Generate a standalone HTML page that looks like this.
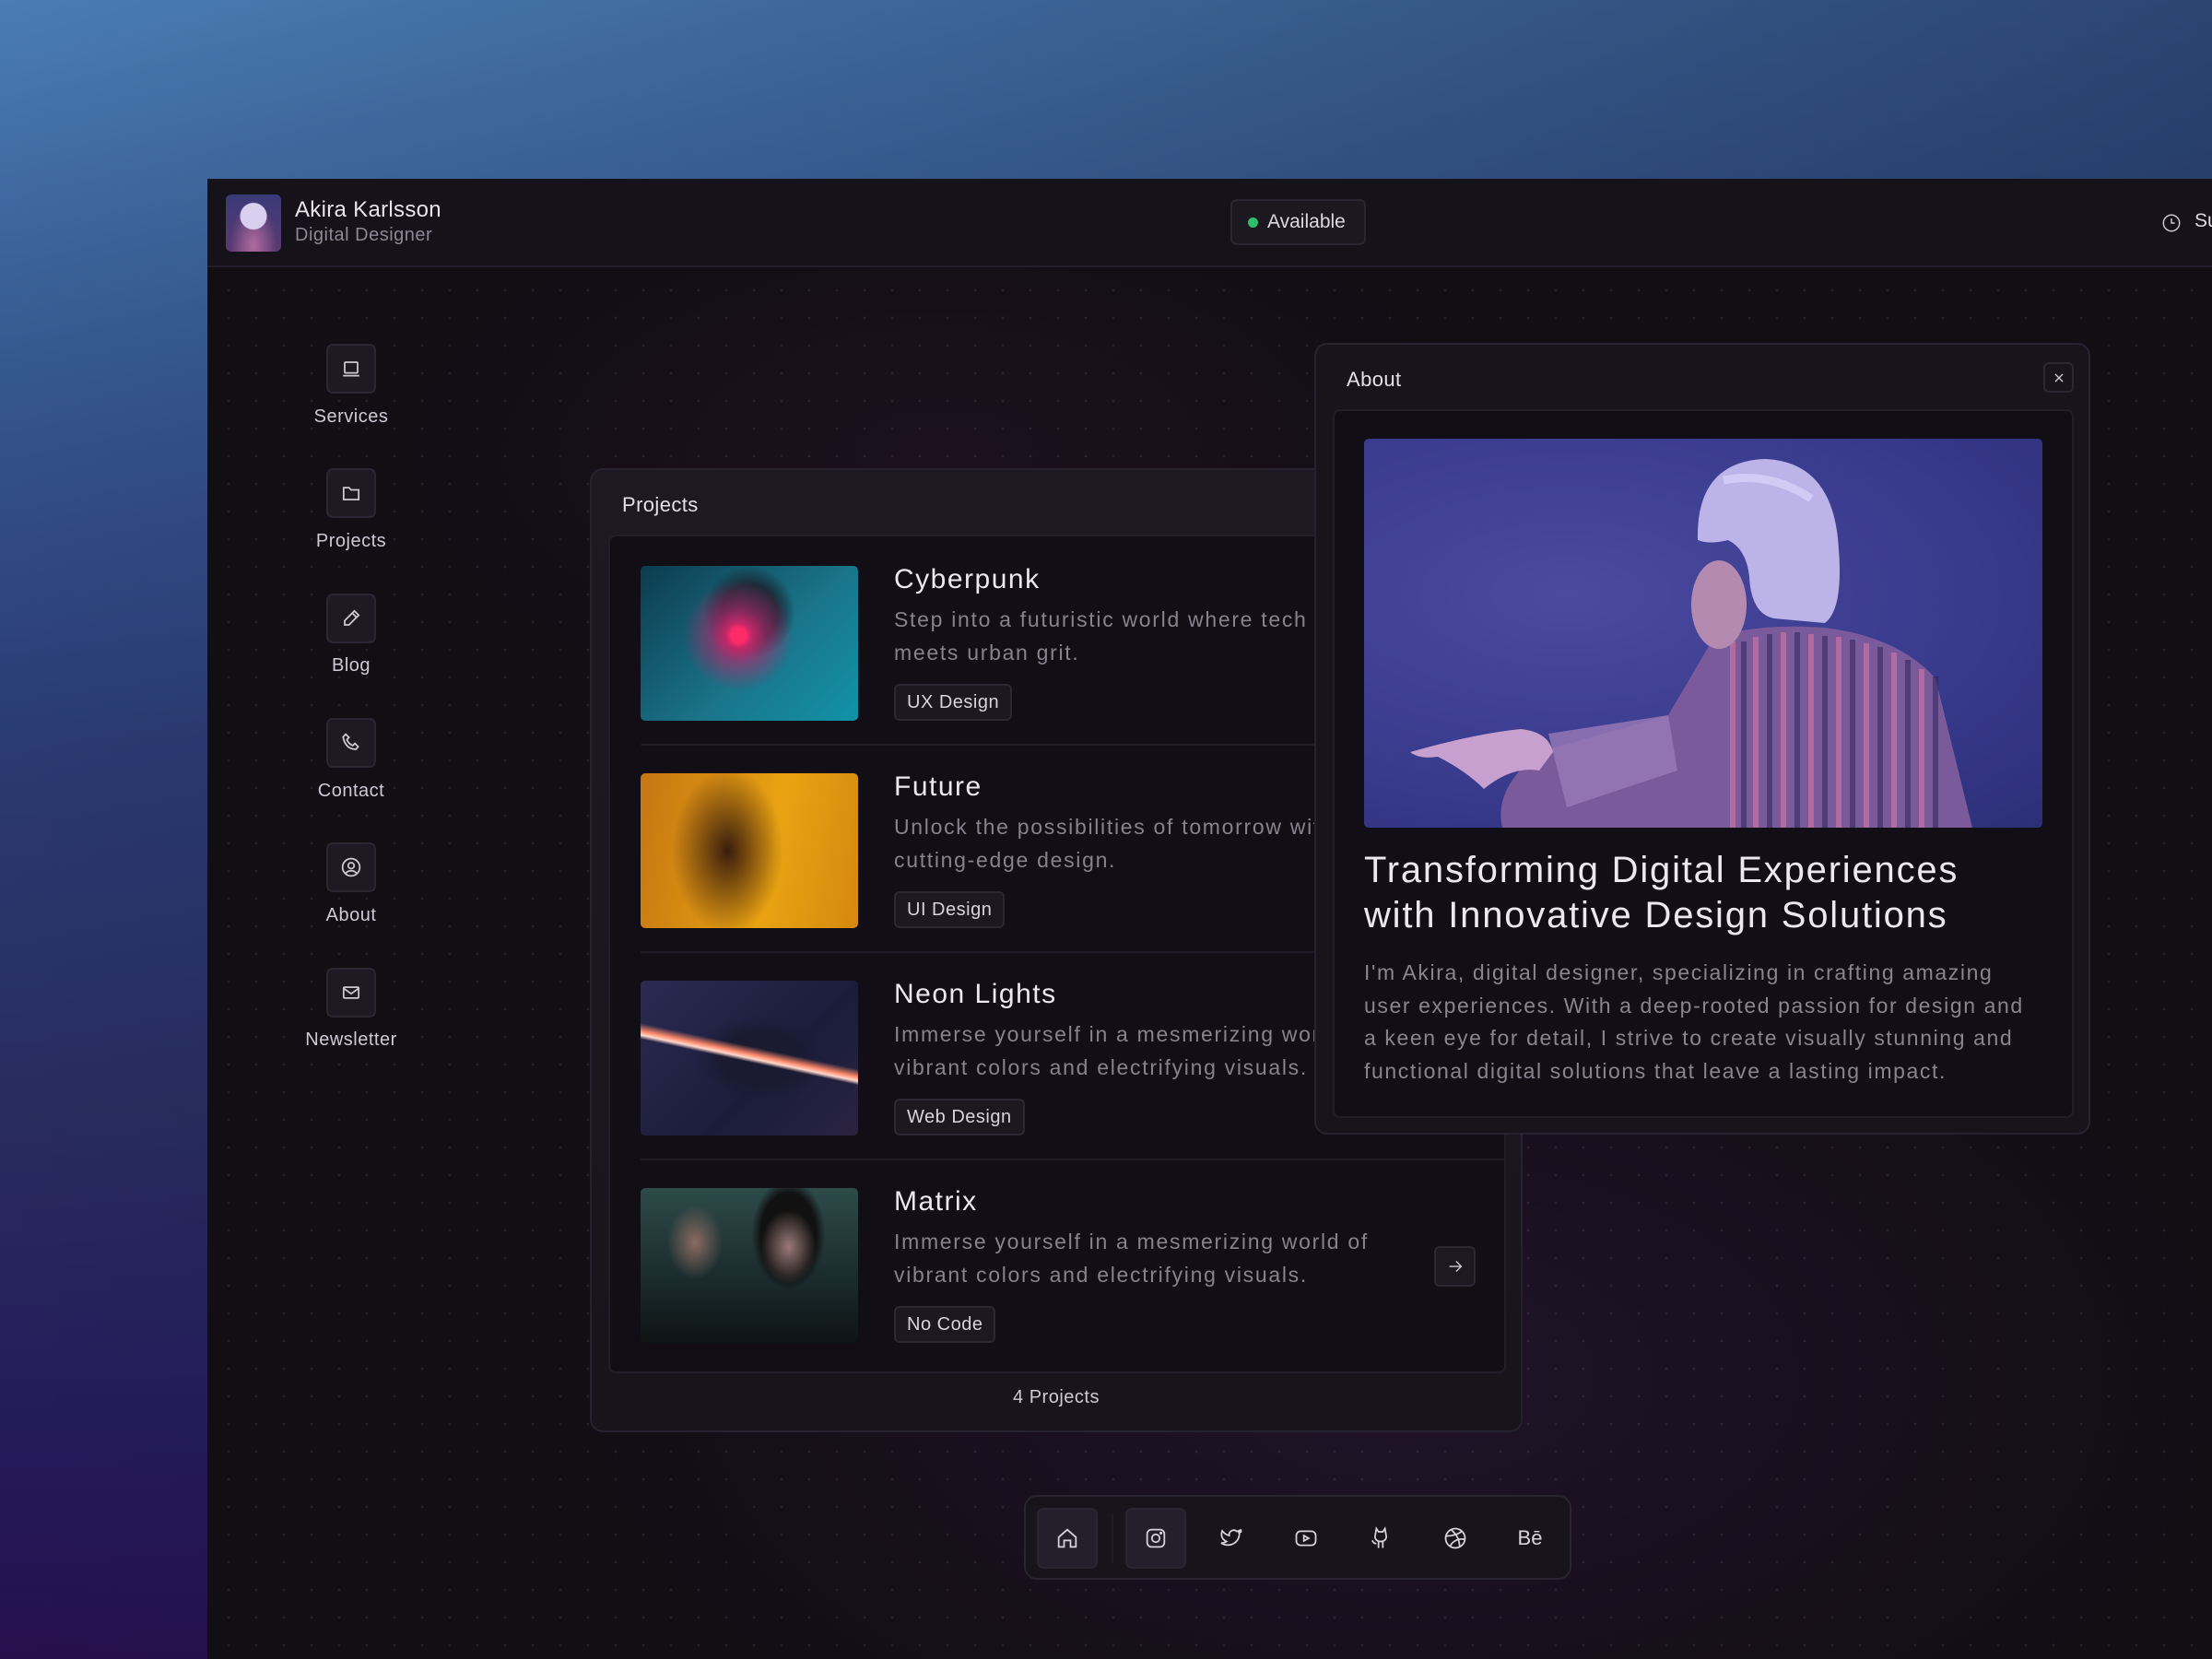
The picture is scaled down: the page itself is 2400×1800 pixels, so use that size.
<!DOCTYPE html>
<html><head><meta charset="utf-8"><style>
*{box-sizing:border-box;margin:0;padding:0}
body{width:2400px;height:1800px;overflow:hidden;font-family:"Liberation Sans",sans-serif;background:linear-gradient(90deg,rgba(0,0,0,0) 0%,rgba(18,24,60,.55) 100%),linear-gradient(180deg,#4a7db3 0,#35588f 22%,#2a3a72 45%,#282c5e 67%,#24195a 88%,#26104c 100%);position:relative}
.win{position:absolute;left:225px;top:194px;width:2175px;height:1606px;background:radial-gradient(ellipse 900px 500px at 1300px 1300px,rgba(70,30,90,.3),transparent),radial-gradient(ellipse 600px 300px at 800px 300px,rgba(70,25,70,.22),transparent),#110e14;overflow:hidden}
.dots{position:absolute;left:0;top:96px;right:0;bottom:0;background-image:radial-gradient(circle,rgba(255,255,255,.08) 1.2px,transparent 1.6px);background-size:30px 30px;background-position:8px 10px}
.hdr{position:absolute;left:0;top:0;right:0;height:96px;border-bottom:2px solid #221d28;background:#15121a}
.av{position:absolute;left:20px;top:17px;width:60px;height:62px;border-radius:6px;background:radial-gradient(circle at 50% 38%,#d8d0ee 0 14px,transparent 15px),radial-gradient(ellipse at 50% 90%,#b06aa0,transparent 60%),linear-gradient(#3a3a78,#5a3a70)}
.name{position:absolute;left:95px;top:20px;color:#e8e4ee;font-size:24px;letter-spacing:.3px}
.role{position:absolute;left:95px;top:50px;color:#8d8796;font-size:20px;letter-spacing:.5px}
.pill{position:absolute;left:1110px;top:22px;width:147px;height:50px;border:2px solid #2a2530;border-radius:7px;background:#1c1820;color:#ddd8e4;font-size:21px;line-height:46px;padding-left:38px}
.pill:before{content:"";position:absolute;left:17px;top:18px;width:11px;height:11px;border-radius:50%;background:#2fbf6c}
.clock{position:absolute;left:2120px;top:37px}
.su{position:absolute;left:2156px;top:34px;color:#ddd8e4;font-size:21px}
.side{position:absolute;left:129px;width:54px;height:54px;border:2px solid #2b2631;border-radius:7px;background:#1e1a24;display:flex;align-items:center;justify-content:center}
.slab{position:absolute;width:200px;left:56px;text-align:center;color:#cfc9d6;font-size:20px;letter-spacing:.5px}
.panel{position:absolute;border:2px solid #272230;border-radius:14px;background:linear-gradient(180deg,#1d1822,#18141c)}
.inner{position:absolute;border:2px solid #221d28;border-radius:8px;background:#110e15}
.ptitle{color:#e4e0ea;font-size:22px;position:absolute;letter-spacing:.4px}
.row{position:absolute;left:0;width:100%;height:225px}
.img{position:absolute;left:33px;top:32px;width:236px;height:168px;border-radius:5px;overflow:hidden}
.rt{position:absolute;left:308px;top:30px;color:#ece8f2;font-size:30px;white-space:nowrap;letter-spacing:1.5px}
.rd{position:absolute;left:308px;top:72px;color:#88828f;font-size:23px;line-height:36px;white-space:nowrap;letter-spacing:1.7px}
.tag{position:absolute;left:308px;top:160px;height:40px;border:2px solid #2c2732;border-radius:6px;background:#1c1820;color:#d8d3de;font-size:20px;line-height:36px;padding:0 12px;letter-spacing:.5px}
.sep{position:absolute;left:33px;right:0;top:0;height:2px;background:#1f1a25}
.dock{position:absolute;left:886px;top:1428px;width:594px;height:92px;border:2px solid #29242f;border-radius:14px;background:#18141c}
.db{position:absolute;top:12px;width:66px;height:66px;border-radius:7px;display:flex;align-items:center;justify-content:center}
.db.on{background:#241f2b;border:2px solid #2a2531}
svg{display:block}
</style></head><body>
<div class="win">
<div class="dots"></div>
<div class="hdr">
<div class="av"></div>
<div class="name">Akira Karlsson</div>
<div class="role">Digital Designer</div>
<div class="pill">Available</div>
<svg class="clock" width="22" height="22" viewBox="0 0 24 24" fill="none" stroke="#cfc9d6" stroke-width="1.6"><circle cx="12" cy="12" r="9.5"/><path d="M12 6.5V12h4"/></svg>
<div class="su">Su</div>
</div>

<div class="side" style="top:179px"><svg width="28" height="28" viewBox="0 0 24 24" fill="none" stroke="#cfc9d6" stroke-width="1.5"><rect x="6" y="6" width="12" height="10" rx="1"/><path d="M4.5 18.5h15"/></svg></div>
<div class="slab" style="top:247px">Services</div>
<div class="side" style="top:314px"><svg width="28" height="28" viewBox="0 0 24 24" fill="none" stroke="#cfc9d6" stroke-width="1.5"><path d="M5 7h5l2 2h7v9H5z"/></svg></div>
<div class="slab" style="top:382px">Projects</div>
<div class="side" style="top:450px"><svg width="28" height="28" viewBox="0 0 24 24" fill="none" stroke="#cfc9d6" stroke-width="1.5"><path d="M15 5l4 4-9 9H6v-4z M13 7l4 4"/></svg></div>
<div class="slab" style="top:517px">Blog</div>
<div class="side" style="top:585px"><svg width="28" height="28" viewBox="0 0 24 24" fill="none" stroke="#cfc9d6" stroke-width="1.5"><path d="M7 4l3 3-2 2c1 2.5 3 4.5 5.5 5.5l2-2 3 3-2 2.5C10 18 6 14 4.5 6.5z"/></svg></div>
<div class="slab" style="top:653px">Contact</div>
<div class="side" style="top:720px"><svg width="28" height="28" viewBox="0 0 24 24" fill="none" stroke="#cfc9d6" stroke-width="1.5"><circle cx="12" cy="12" r="8"/><circle cx="12" cy="10.5" r="2.8"/><path d="M7 17.5c2.5-3 7.5-3 10 0"/></svg></div>
<div class="slab" style="top:788px">About</div>
<div class="side" style="top:856px"><svg width="28" height="28" viewBox="0 0 24 24" fill="none" stroke="#cfc9d6" stroke-width="1.5"><rect x="5" y="7" width="14" height="10" rx="1"/><path d="M5 8l7 5 7-5"/></svg></div>
<div class="slab" style="top:923px">Newsletter</div>

<div class="panel" style="left:415px;top:314px;width:1012px;height:1046px">
<div class="ptitle" style="left:33px;top:25px">Projects</div>
<div class="inner" style="left:18px;top:70px;width:974px;height:910px;overflow:hidden">
<div class="row" style="top:0">
<div class="img" style="background:radial-gradient(circle at 45% 45%,#ff2a6a 0 8px,#c02868 14px,rgba(180,40,110,.6) 30px,transparent 60px),radial-gradient(ellipse at 50% 30%,#1a2a35 0 30px,transparent 50px),linear-gradient(135deg,#0c3b4e,#1a7288 55%,#1193a8)"></div>
<div class="rt">Cyberpunk</div>
<div class="rd">Step into a futuristic world where tech<br>meets urban grit.</div>
<div class="tag">UX Design</div>
</div>
<div class="row" style="top:225px"><div class="sep"></div>
<div class="img" style="background:radial-gradient(ellipse 60px 90px at 40% 50%,#3a1e0c,transparent),linear-gradient(100deg,#c57612,#e9a312 60%,#d48810)"></div>
<div class="rt">Future</div>
<div class="rd">Unlock the possibilities of tomorrow with<br>cutting-edge design.</div>
<div class="tag">UI Design</div>
</div>
<div class="row" style="top:450px"><div class="sep"></div>
<div class="img" style="background:linear-gradient(12deg,transparent 48%,#ffd8cc 50%,#ff8a6a 52%,transparent 56%),radial-gradient(ellipse at 55% 50%,#1a1a30 0 40px,transparent 70px),linear-gradient(135deg,#2b2a52,#1a1d3a 60%,#2a2340)"></div>
<div class="rt">Neon Lights</div>
<div class="rd">Immerse yourself in a mesmerizing world of<br>vibrant colors and electrifying visuals.</div>
<div class="tag">Web Design</div>
</div>
<div class="row" style="top:675px"><div class="sep"></div>
<div class="img" style="background:radial-gradient(ellipse 30px 40px at 25% 35%,#8a6a60,transparent),radial-gradient(ellipse 30px 40px at 68% 38%,#9a7a78,transparent),radial-gradient(ellipse 40px 60px at 68% 30%,#111 0 30px,transparent 40px),linear-gradient(180deg,#2e4a4a,#1a2a2c 60%,#0e1414)"></div>
<div class="rt">Matrix</div>
<div class="rd">Immerse yourself in a mesmerizing world of<br>vibrant colors and electrifying visuals.</div>
<div class="tag">No Code</div>
<div style="position:absolute;left:894px;top:95px;width:45px;height:44px;border:2px solid #2c2732;border-radius:6px;background:#1d1922;display:flex;align-items:center;justify-content:center"><svg width="22" height="22" viewBox="0 0 24 24" fill="none" stroke="#cfc9d6" stroke-width="1.5"><path d="M5 12h14M13 6l6 6-6 6"/></svg></div>
</div>
</div>
<div style="position:absolute;left:0;width:100%;top:995px;text-align:center;color:#cfc9d6;font-size:20px;letter-spacing:.5px">4 Projects</div>
</div>

<div class="panel" style="left:1201px;top:178px;width:842px;height:859px;background:#18141c">
<div class="ptitle" style="left:33px;top:25px">About</div>
<div style="position:absolute;left:789px;top:19px;width:33px;height:33px;border:2px solid #2c2732;border-radius:6px;display:flex;align-items:center;justify-content:center"><svg width="16" height="16" viewBox="0 0 24 24" fill="none" stroke="#cfc9d6" stroke-width="2"><path d="M6 6l12 12M18 6L6 18"/></svg></div>
<div class="inner" style="left:18px;top:70px;width:804px;height:769px">
<div style="position:absolute;left:32px;top:30px;width:736px;height:422px;border-radius:5px;overflow:hidden;background:radial-gradient(ellipse at 30% 40%,#4a4aa0,#383a8c 60%,#2c2f78)">
<svg width="736" height="422" viewBox="0 0 736 422">
<path d="M380 215 Q430 200 500 205 Q580 215 620 260 L660 422 L150 422 Q140 380 190 340 Q260 320 330 300 Z" fill="#7a5a9a"/>
<g stroke-width="6" opacity=".55"><path d="M400 220V422M425 215V422M455 210V422M485 212V422M515 215V422M545 222V422M575 232V422M605 250V422" stroke="#e07aa8"/><path d="M412 220V422M440 212V422M470 210V422M500 214V422M530 218V422M560 226V422M590 240V422M620 258V422" stroke="#2a2458"/></g>
<path d="M200 320 L330 300 L340 360 L220 400 Z" fill="#9a7ab8" opacity=".8"/>
<path d="M50 340 Q120 320 170 315 Q200 318 205 340 L190 360 Q160 355 130 380 Q110 360 80 345 Q60 348 50 340Z" fill="#c8a0d0"/>
<ellipse cx="385" cy="180" rx="30" ry="48" fill="#b48ab0"/>
<path d="M362 110 Q360 25 435 22 Q510 25 515 120 Q520 185 500 200 L445 195 Q420 190 418 150 Q415 120 395 110 Q375 115 362 110Z" fill="#bcb4e8"/>
<path d="M390 45 Q440 35 485 65" stroke="#e0daff" stroke-width="9" fill="none" opacity=".6"/>
</svg></div>
<div style="position:absolute;left:32px;top:474px;color:#ece8f2;font-size:40px;line-height:49px;letter-spacing:1.8px;white-space:nowrap">Transforming Digital Experiences<br>with Innovative Design Solutions</div>
<div style="position:absolute;left:32px;top:592px;color:#8a8491;font-size:23px;line-height:35.5px;white-space:nowrap;letter-spacing:1.6px">I'm Akira, digital designer, specializing in crafting amazing<br>user experiences. With a deep-rooted passion for design and<br>a keen eye for detail, I strive to create visually stunning and<br>functional digital solutions that leave a lasting impact.</div>
</div>
</div>

<div class="dock">
<div class="db on" style="left:12px"><svg width="28" height="28" viewBox="0 0 24 24" fill="none" stroke="#d8d3de" stroke-width="1.5"><path d="M4 11l8-7 8 7v9h-5v-6h-6v6H4z"/></svg></div>
<div style="position:absolute;left:93px;top:18px;width:2px;height:54px;background:#201b26"></div>
<div class="db on" style="left:108px"><svg width="28" height="28" viewBox="0 0 24 24" fill="none" stroke="#d8d3de" stroke-width="1.5"><rect x="4" y="4" width="16" height="16" rx="4"/><circle cx="12" cy="12" r="3.6"/><circle cx="16.8" cy="7.2" r=".6" fill="#d8d3de"/></svg></div>
<div class="db" style="left:190px"><svg width="28" height="28" viewBox="0 0 24 24" fill="none" stroke="#d8d3de" stroke-width="1.5"><path d="M21 6c-1 .5-1.8.7-2.6.8.9-.6 1.5-1.4 1.6-2.3-.9.5-1.900.9-2.9 1.1A4.3 4.3 0 0 0 10 9.5 12 12 0 0 1 3.5 5s-3 7 4 10c-1.6 1-3.3 1.6-5 1.5 8 4.5 17 0 17-9.5 0-.3 0-.5-.1-.7.8-.6 1.3-1.3 1.6-2.3z"/></svg></div>
<div class="db" style="left:271px"><svg width="28" height="28" viewBox="0 0 24 24" fill="none" stroke="#d8d3de" stroke-width="1.5"><rect x="3" y="5.5" width="18" height="13" rx="4"/><path d="M10 9.5v5l4.5-2.5z"/></svg></div>
<div class="db" style="left:352px"><svg width="28" height="28" viewBox="0 0 24 24" fill="none" stroke="#d8d3de" stroke-width="1.5"><path d="M8 3l2 3h4l2-3 1 6c1 3-1 6-5 6s-6-3-5-6z M10 15v6M14 15v6M8 17c-3 0-3-2-4-3"/></svg></div>
<div class="db" style="left:433px"><svg width="28" height="28" viewBox="0 0 24 24" fill="none" stroke="#d8d3de" stroke-width="1.5"><circle cx="12" cy="12" r="9"/><path d="M8 4c5 4 8 9 8 16M3.5 10c6 0 12-2 15-5M7 20c2-5 7-8 14-7"/></svg></div>
<div class="db" style="left:514px;color:#d8d3de;font-size:22px">Bē</div>
</div>
</div>
</body></html>
